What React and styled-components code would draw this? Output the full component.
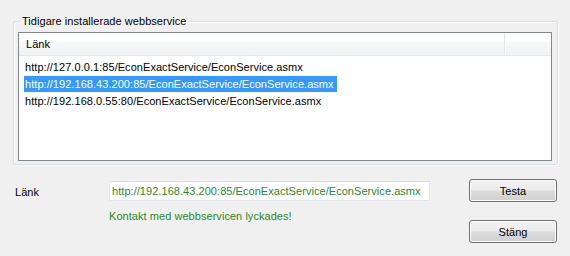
import React from 'react';
import styled, { createGlobalStyle } from 'styled-components';

const GlobalStyle = createGlobalStyle`
  html, body {
    margin: 0;
    padding: 0;
    background: #f0f0f0;
  }
  body {
    font-family: 'Liberation Sans', Arial, sans-serif;
    font-size: 11px;
    letter-spacing: 0.05px;
    color: #000;
  }
`;

const Window = styled.div`
  width: 570px;
  height: 256px;
  box-sizing: border-box;
  padding: 15px 13px 0 13px;
  background: #f0f0f0;
`;

const GroupBox = styled.fieldset`
  margin: 0;
  width: 545px;
  box-sizing: border-box;
  padding: 4px 5px 3px 4px;
  border: 1px solid #d5dfe5;
  border-radius: 3px;
  box-shadow: inset 1px 1px 0 #fff, 1px 1px 0 #fff;
`;

const Legend = styled.legend`
  padding: 0 1px;
  margin-left: 3px;
  line-height: 13px;
`;

const ListBox = styled.div`
  height: 129px;
  box-sizing: border-box;
  border: 1px solid #828790;
  background: #fff;
`;

const Header = styled.div`
  display: grid;
  grid-template-columns: 486px 1fr;
  height: 23px;
  box-sizing: border-box;
  border-bottom: 1px solid #e5e5e5;
  background: linear-gradient(#ffffff 0%, #ffffff 40%, #f7f8fa 41%, #f1f2f4 100%);
`;

const HeaderCell = styled.div`
  display: flex;
  align-items: center;
  padding-left: 7px;
  border-right: ${({ $last }) => ($last ? 'none' : '1px solid #e3e6ea')};
  box-shadow: ${({ $last }) => ($last ? 'none' : '1px 0 0 #fff')};
`;

const Rows = styled.div`
  padding: 2px 0 0 5px;
`;

const Row = styled.div`
  display: flex;
  height: 17px;
  align-items: center;
`;

const RowText = styled.span`
  padding: 0 3px 0 1px;
  line-height: 16px;
  background: ${({ $selected }) => ($selected ? '#3399ff' : 'transparent')};
  color: ${({ $selected }) => ($selected ? '#fff' : '#000')};
`;

const Bottom = styled.div`
  display: grid;
  grid-template-columns: 94px 321px 88px;
  padding: 14px 0 0 2px;
  & > :nth-child(3) {
    margin-left: 39px;
  }
`;

const Label = styled.div`
  height: 23px;
  display: flex;
  align-items: center;
  padding-top: 2px;
  box-sizing: border-box;
`;

const Field = styled.div`
  display: flex;
  flex-direction: column;
  padding-top: 2px;
`;

const TextBox = styled.div`
  height: 20px;
  box-sizing: border-box;
  border: 1px solid #e2e7ec;
  border-top-color: #d8dde3;
  background: #fff;
  color: #2a8a2a;
  display: flex;
  align-items: center;
  padding-left: 2px;
`;

const Status = styled.div`
  margin-top: 9px;
  color: #2a8a2a;
`;

const Buttons = styled.div`
  display: flex;
  flex-direction: column;
  gap: 18px;
`;

const Button = styled.button`
  width: 88px;
  height: 23px;
  box-sizing: border-box;
  border: 1px solid #707070;
  border-radius: 3px;
  background: linear-gradient(#f2f2f2 0%, #ebebeb 48%, #dddddd 52%, #cfcfcf 100%);
  box-shadow: inset 0 0 0 1px #fcfcfc;
  font-family: inherit;
  font-size: 11px;
  letter-spacing: inherit;
  color: #000;
  padding: 0;
`;

const links = [
  'http://127.0.0.1:85/EconExactService/EconService.asmx',
  'http://192.168.43.200:85/EconExactService/EconService.asmx',
  'http://192.168.0.55:80/EconExactService/EconService.asmx',
];

export default function App() {
  return (
    <>
      <GlobalStyle />
      <Window>
        <GroupBox>
          <Legend>Tidigare installerade webbservice</Legend>
          <ListBox>
            <Header>
              <HeaderCell>Länk</HeaderCell>
              <HeaderCell $last />
            </Header>
            <Rows>
              {links.map((link, i) => (
                <Row key={link}>
                  <RowText $selected={i === 1}>{link}</RowText>
                </Row>
              ))}
            </Rows>
          </ListBox>
        </GroupBox>
        <Bottom>
          <Label>Länk</Label>
          <Field>
            <TextBox>http://192.168.43.200:85/EconExactService/EconService.asmx</TextBox>
            <Status>Kontakt med webbservicen lyckades!</Status>
          </Field>
          <Buttons>
            <Button>Testa</Button>
            <Button>Stäng</Button>
          </Buttons>
        </Bottom>
      </Window>
    </>
  );
}
